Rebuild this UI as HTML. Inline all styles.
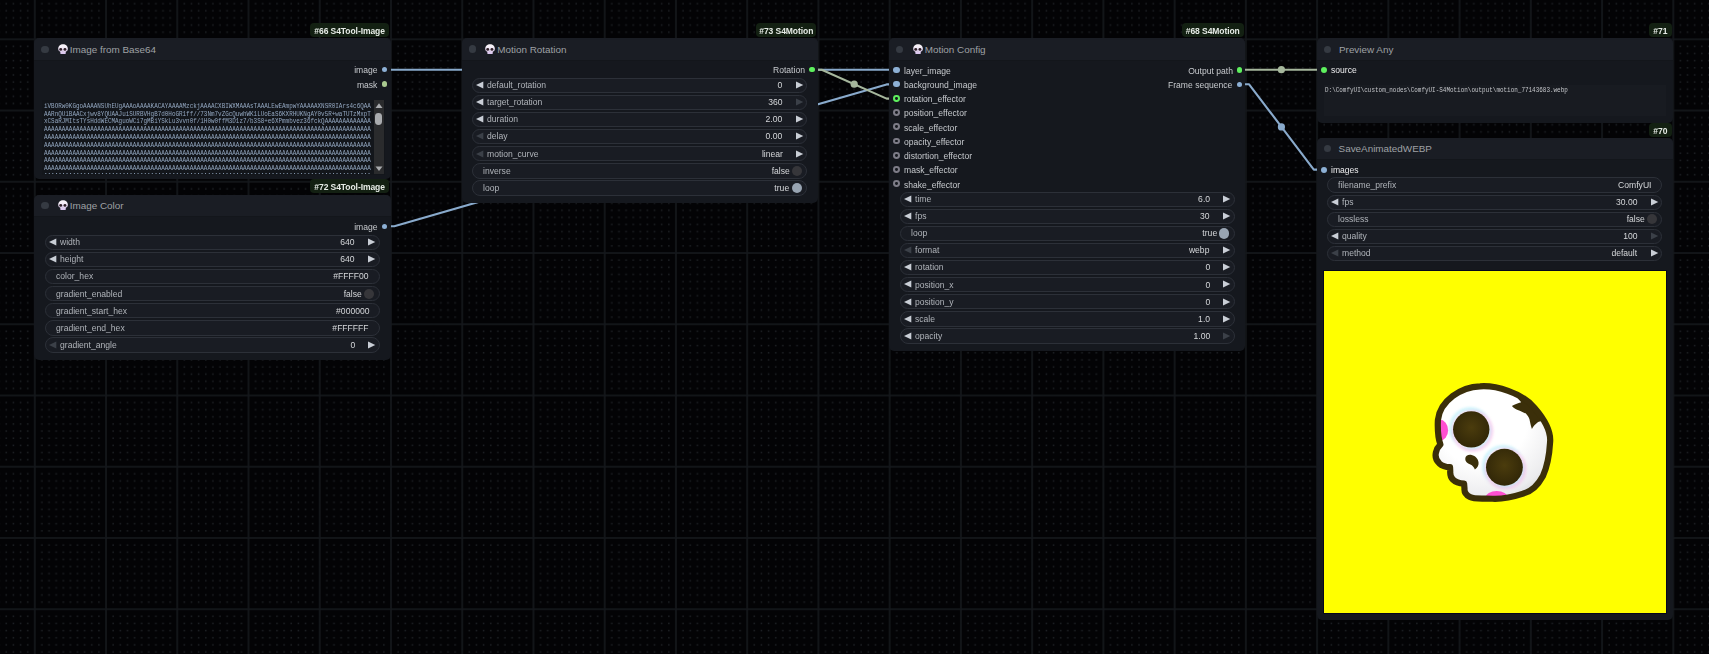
<!DOCTYPE html><html><head><meta charset="utf-8"><style>
html,body{margin:0;padding:0;width:1709px;height:654px;overflow:hidden;background:#030305;font-family:"Liberation Sans",sans-serif;}
div{position:absolute;white-space:nowrap;}
svg{position:absolute;}
.node{background:#15181e;border-radius:5px;}
.title{background:#1a1d24;border-radius:5px 5px 0 0;}
.tdot{width:7.2px;height:7.2px;border-radius:50%;background:#353a42;}
.ttxt{font-size:9.9px;color:#9fa1a5;line-height:12px;}
.badge{background:#132012;border-radius:4px;height:13.9px;}
.btxt{left:0;right:0;top:0;color:#e6ebe6;font-weight:bold;font-size:9.6px;letter-spacing:-0.1px;line-height:15.6px;text-align:center;transform:scaleX(0.89);}
.w{height:15.4px;border:1px solid #2c3038;border-radius:8px;background:#191c23;box-sizing:border-box;}
.lbl{font-size:9.4px;color:#b0b4ba;line-height:11px;transform:scaleX(0.915);transform-origin:0 0;}
.val{font-size:9.4px;color:#d6d8db;line-height:11px;text-align:right;transform:scaleX(0.915);transform-origin:100% 0;}
.slot{font-size:9.4px;color:#c6c9cd;line-height:11px;transform:scaleX(0.915);transform-origin:0 0;}
.R{transform-origin:100% 0;}
.dot{border-radius:50%;}
.mono{font-family:"Liberation Mono",monospace;}

</style></head><body>
<svg style="left:0;top:0" width="1709" height="654">
<defs><pattern id="g" patternUnits="userSpaceOnUse" x="33.80" y="38.30" width="71.240" height="71.240">
<rect x="7.37" y="7.37" width="1.5" height="1.5" fill="#1d2024"/>
<rect x="7.37" y="14.50" width="1.5" height="1.5" fill="#1d2024"/>
<rect x="7.37" y="21.62" width="1.5" height="1.5" fill="#1d2024"/>
<rect x="7.37" y="28.75" width="1.5" height="1.5" fill="#1d2024"/>
<rect x="7.37" y="35.87" width="1.5" height="1.5" fill="#1d2024"/>
<rect x="7.37" y="42.99" width="1.5" height="1.5" fill="#1d2024"/>
<rect x="7.37" y="50.12" width="1.5" height="1.5" fill="#1d2024"/>
<rect x="7.37" y="57.24" width="1.5" height="1.5" fill="#1d2024"/>
<rect x="7.37" y="64.37" width="1.5" height="1.5" fill="#1d2024"/>
<rect x="14.50" y="7.37" width="1.5" height="1.5" fill="#1d2024"/>
<rect x="14.50" y="14.50" width="1.5" height="1.5" fill="#1d2024"/>
<rect x="14.50" y="21.62" width="1.5" height="1.5" fill="#1d2024"/>
<rect x="14.50" y="28.75" width="1.5" height="1.5" fill="#1d2024"/>
<rect x="14.50" y="35.87" width="1.5" height="1.5" fill="#1d2024"/>
<rect x="14.50" y="42.99" width="1.5" height="1.5" fill="#1d2024"/>
<rect x="14.50" y="50.12" width="1.5" height="1.5" fill="#1d2024"/>
<rect x="14.50" y="57.24" width="1.5" height="1.5" fill="#1d2024"/>
<rect x="14.50" y="64.37" width="1.5" height="1.5" fill="#1d2024"/>
<rect x="21.62" y="7.37" width="1.5" height="1.5" fill="#1d2024"/>
<rect x="21.62" y="14.50" width="1.5" height="1.5" fill="#1d2024"/>
<rect x="21.62" y="21.62" width="1.5" height="1.5" fill="#1d2024"/>
<rect x="21.62" y="28.75" width="1.5" height="1.5" fill="#1d2024"/>
<rect x="21.62" y="35.87" width="1.5" height="1.5" fill="#1d2024"/>
<rect x="21.62" y="42.99" width="1.5" height="1.5" fill="#1d2024"/>
<rect x="21.62" y="50.12" width="1.5" height="1.5" fill="#1d2024"/>
<rect x="21.62" y="57.24" width="1.5" height="1.5" fill="#1d2024"/>
<rect x="21.62" y="64.37" width="1.5" height="1.5" fill="#1d2024"/>
<rect x="28.75" y="7.37" width="1.5" height="1.5" fill="#1d2024"/>
<rect x="28.75" y="14.50" width="1.5" height="1.5" fill="#1d2024"/>
<rect x="28.75" y="21.62" width="1.5" height="1.5" fill="#1d2024"/>
<rect x="28.75" y="28.75" width="1.5" height="1.5" fill="#1d2024"/>
<rect x="28.75" y="35.87" width="1.5" height="1.5" fill="#1d2024"/>
<rect x="28.75" y="42.99" width="1.5" height="1.5" fill="#1d2024"/>
<rect x="28.75" y="50.12" width="1.5" height="1.5" fill="#1d2024"/>
<rect x="28.75" y="57.24" width="1.5" height="1.5" fill="#1d2024"/>
<rect x="28.75" y="64.37" width="1.5" height="1.5" fill="#1d2024"/>
<rect x="35.87" y="7.37" width="1.5" height="1.5" fill="#1d2024"/>
<rect x="35.87" y="14.50" width="1.5" height="1.5" fill="#1d2024"/>
<rect x="35.87" y="21.62" width="1.5" height="1.5" fill="#1d2024"/>
<rect x="35.87" y="28.75" width="1.5" height="1.5" fill="#1d2024"/>
<rect x="35.87" y="35.87" width="1.5" height="1.5" fill="#1d2024"/>
<rect x="35.87" y="42.99" width="1.5" height="1.5" fill="#1d2024"/>
<rect x="35.87" y="50.12" width="1.5" height="1.5" fill="#1d2024"/>
<rect x="35.87" y="57.24" width="1.5" height="1.5" fill="#1d2024"/>
<rect x="35.87" y="64.37" width="1.5" height="1.5" fill="#1d2024"/>
<rect x="42.99" y="7.37" width="1.5" height="1.5" fill="#1d2024"/>
<rect x="42.99" y="14.50" width="1.5" height="1.5" fill="#1d2024"/>
<rect x="42.99" y="21.62" width="1.5" height="1.5" fill="#1d2024"/>
<rect x="42.99" y="28.75" width="1.5" height="1.5" fill="#1d2024"/>
<rect x="42.99" y="35.87" width="1.5" height="1.5" fill="#1d2024"/>
<rect x="42.99" y="42.99" width="1.5" height="1.5" fill="#1d2024"/>
<rect x="42.99" y="50.12" width="1.5" height="1.5" fill="#1d2024"/>
<rect x="42.99" y="57.24" width="1.5" height="1.5" fill="#1d2024"/>
<rect x="42.99" y="64.37" width="1.5" height="1.5" fill="#1d2024"/>
<rect x="50.12" y="7.37" width="1.5" height="1.5" fill="#1d2024"/>
<rect x="50.12" y="14.50" width="1.5" height="1.5" fill="#1d2024"/>
<rect x="50.12" y="21.62" width="1.5" height="1.5" fill="#1d2024"/>
<rect x="50.12" y="28.75" width="1.5" height="1.5" fill="#1d2024"/>
<rect x="50.12" y="35.87" width="1.5" height="1.5" fill="#1d2024"/>
<rect x="50.12" y="42.99" width="1.5" height="1.5" fill="#1d2024"/>
<rect x="50.12" y="50.12" width="1.5" height="1.5" fill="#1d2024"/>
<rect x="50.12" y="57.24" width="1.5" height="1.5" fill="#1d2024"/>
<rect x="50.12" y="64.37" width="1.5" height="1.5" fill="#1d2024"/>
<rect x="57.24" y="7.37" width="1.5" height="1.5" fill="#1d2024"/>
<rect x="57.24" y="14.50" width="1.5" height="1.5" fill="#1d2024"/>
<rect x="57.24" y="21.62" width="1.5" height="1.5" fill="#1d2024"/>
<rect x="57.24" y="28.75" width="1.5" height="1.5" fill="#1d2024"/>
<rect x="57.24" y="35.87" width="1.5" height="1.5" fill="#1d2024"/>
<rect x="57.24" y="42.99" width="1.5" height="1.5" fill="#1d2024"/>
<rect x="57.24" y="50.12" width="1.5" height="1.5" fill="#1d2024"/>
<rect x="57.24" y="57.24" width="1.5" height="1.5" fill="#1d2024"/>
<rect x="57.24" y="64.37" width="1.5" height="1.5" fill="#1d2024"/>
<rect x="64.37" y="7.37" width="1.5" height="1.5" fill="#1d2024"/>
<rect x="64.37" y="14.50" width="1.5" height="1.5" fill="#1d2024"/>
<rect x="64.37" y="21.62" width="1.5" height="1.5" fill="#1d2024"/>
<rect x="64.37" y="28.75" width="1.5" height="1.5" fill="#1d2024"/>
<rect x="64.37" y="35.87" width="1.5" height="1.5" fill="#1d2024"/>
<rect x="64.37" y="42.99" width="1.5" height="1.5" fill="#1d2024"/>
<rect x="64.37" y="50.12" width="1.5" height="1.5" fill="#1d2024"/>
<rect x="64.37" y="57.24" width="1.5" height="1.5" fill="#1d2024"/>
<rect x="64.37" y="64.37" width="1.5" height="1.5" fill="#1d2024"/>
<rect x="0.2" y="0.2" width="71.240" height="1.6" fill="#15181c"/><rect x="0.2" y="0.2" width="1.6" height="71.240" fill="#15181c"/>
</pattern></defs><rect width="1709" height="654" fill="url(#g)"/>
<path d="M384.3 69.7L394.3 69.7L886.6 69.8L896.6 69.8" stroke="#89aacc" stroke-width="2.1" fill="none" stroke-linejoin="round"/>
<circle cx="640.5" cy="69.8" r="3.6" fill="#89aacc"/>
<path d="M384.3 226.3L394.3 226.3L886.6 84.4L896.6 84.4" stroke="#89aacc" stroke-width="2.1" fill="none" stroke-linejoin="round"/>
<circle cx="640.5" cy="155.4" r="3.6" fill="#89aacc"/>
<path d="M811.7 69.7L821.7 69.7L886.6 98.6L896.6 98.6" stroke="#a6b79d" stroke-width="2.1" fill="none" stroke-linejoin="round"/>
<circle cx="854.2" cy="84.2" r="3.6" fill="#a6b79d"/>
<path d="M1239.1 69.7L1249.1 69.7L1313.8 69.7L1323.8 69.7" stroke="#a6b79d" stroke-width="2.1" fill="none" stroke-linejoin="round"/>
<circle cx="1281.4" cy="69.7" r="3.6" fill="#a6b79d"/>
<path d="M1239.1 84.3L1249.1 84.3L1313.8 169.6L1323.8 169.6" stroke="#89aacc" stroke-width="2.1" fill="none" stroke-linejoin="round"/>
<circle cx="1281.4" cy="126.9" r="3.6" fill="#89aacc"/>
</svg>
<div class="node" style="left:34.3px;top:38.3px;width:356.3px;height:141.0px"></div>
<div class="title" style="left:34.3px;top:38.3px;width:356.3px;height:21.4px"></div>
<div style="left:34.3px;top:59.6px;width:356.3px;height:1px;background:#13161b"></div>
<div class="tdot" style="left:41.4px;top:45.5px"></div>
<svg width="10.1" height="10.1" viewBox="0 0 10 10" style="left:57.8px;top:43.9px"><defs><linearGradient id="sg" x1="0" y1="0" x2="0" y2="1"><stop offset="0.2" stop-color="#f7f2f8"/><stop offset="1" stop-color="#d8c2ee"/></linearGradient></defs><path d="M5 0.2C2.2 0.2 0.2 2.2 0.2 4.8C0.2 6.3 1 7.3 2.3 7.8L2.3 9.2C2.3 9.7 2.7 10 3.1 10L6.9 10C7.3 10 7.7 9.7 7.7 9.2L7.7 7.8C9 7.3 9.8 6.3 9.8 4.8C9.8 2.2 7.8 0.2 5 0.2Z" fill="url(#sg)"/><ellipse cx="2.7" cy="5.4" rx="1.45" ry="1.4" fill="#2e1f26"/><ellipse cx="6.9" cy="5.4" rx="1.45" ry="1.4" fill="#2e1f26"/><path d="M4.8 6.4L5.3 7.3L4.3 7.3Z" fill="#8a7a90"/></svg>
<div class="ttxt" style="left:69.8px;top:43.6px">Image from Base64</div>
<div class="badge" style="left:310.0px;width:79.0px;top:23.0px"><div class="btxt">#66 S4Tool-Image</div></div>
<div class="dot" style="left:381.8px;top:66.9px;width:5.6px;height:5.6px;background:#8db0d5"></div>
<div class="slot R" style="right:1331.3px;top:64.4px">image</div>
<div class="dot" style="left:381.8px;top:81.4px;width:5.6px;height:5.6px;background:#a9c98f"></div>
<div class="slot R" style="right:1331.3px;top:78.9px">mask</div>
<div class="node" style="left:34.3px;top:194.8px;width:356.3px;height:165.1px"></div>
<div class="title" style="left:34.3px;top:194.8px;width:356.3px;height:21.4px"></div>
<div style="left:34.3px;top:216.1px;width:356.3px;height:1px;background:#13161b"></div>
<div class="tdot" style="left:41.4px;top:202.0px"></div>
<svg width="10.1" height="10.1" viewBox="0 0 10 10" style="left:57.8px;top:200.4px"><defs><linearGradient id="sg" x1="0" y1="0" x2="0" y2="1"><stop offset="0.2" stop-color="#f7f2f8"/><stop offset="1" stop-color="#d8c2ee"/></linearGradient></defs><path d="M5 0.2C2.2 0.2 0.2 2.2 0.2 4.8C0.2 6.3 1 7.3 2.3 7.8L2.3 9.2C2.3 9.7 2.7 10 3.1 10L6.9 10C7.3 10 7.7 9.7 7.7 9.2L7.7 7.8C9 7.3 9.8 6.3 9.8 4.8C9.8 2.2 7.8 0.2 5 0.2Z" fill="url(#sg)"/><ellipse cx="2.7" cy="5.4" rx="1.45" ry="1.4" fill="#2e1f26"/><ellipse cx="6.9" cy="5.4" rx="1.45" ry="1.4" fill="#2e1f26"/><path d="M4.8 6.4L5.3 7.3L4.3 7.3Z" fill="#8a7a90"/></svg>
<div class="ttxt" style="left:69.8px;top:200.1px">Image Color</div>
<div class="badge" style="left:310.0px;width:79.0px;top:179.4px"><div class="btxt">#72 S4Tool-Image</div></div>
<div class="dot" style="left:381.8px;top:223.5px;width:5.6px;height:5.6px;background:#8db0d5"></div>
<div class="slot R" style="right:1331.3px;top:221.0px">image</div>
<div class="w" style="left:44.8px;top:234.7px;width:335.2px"></div>
<svg width="8" height="8" style="left:48.9px;top:238.1px"><path d="M7.3 0.4L7.3 7.6L0 4Z" fill="#c9ced6"/></svg>
<svg width="8" height="8" style="left:368.4px;top:238.1px"><path d="M0 0.4L0 7.6L7.3 4Z" fill="#c9ced6"/></svg>
<div class="lbl" style="left:59.6px;top:236.2px">width</div>
<div class="val" style="right:1354.0px;top:236.2px">640</div>
<div class="w" style="left:44.8px;top:251.8px;width:335.2px"></div>
<svg width="8" height="8" style="left:48.9px;top:255.2px"><path d="M7.3 0.4L7.3 7.6L0 4Z" fill="#c9ced6"/></svg>
<svg width="8" height="8" style="left:368.4px;top:255.2px"><path d="M0 0.4L0 7.6L7.3 4Z" fill="#c9ced6"/></svg>
<div class="lbl" style="left:59.6px;top:253.3px">height</div>
<div class="val" style="right:1354.0px;top:253.3px">640</div>
<div class="w" style="left:44.8px;top:268.9px;width:335.2px"></div>
<div class="lbl" style="left:55.7px;top:270.4px">color_hex</div>
<div class="val" style="right:1340.0px;top:270.4px">#FFFF00</div>
<div class="w" style="left:44.8px;top:286.0px;width:335.2px"></div>
<div class="lbl" style="left:55.7px;top:287.5px">gradient_enabled</div>
<div class="val" style="right:1346.9px;top:287.5px">false</div>
<div class="dot" style="left:364.2px;top:288.7px;width:10.2px;height:10.2px;background:#36363a"></div>
<div class="w" style="left:44.8px;top:303.1px;width:335.2px"></div>
<div class="lbl" style="left:55.7px;top:304.6px">gradient_start_hex</div>
<div class="val" style="right:1340.0px;top:304.6px">#000000</div>
<div class="w" style="left:44.8px;top:320.2px;width:335.2px"></div>
<div class="lbl" style="left:55.7px;top:321.7px">gradient_end_hex</div>
<div class="val" style="right:1340.0px;top:321.7px">#FFFFFF</div>
<div class="w" style="left:44.8px;top:337.3px;width:335.2px"></div>
<svg width="8" height="8" style="left:48.9px;top:340.7px"><path d="M7.3 0.4L7.3 7.6L0 4Z" fill="#3b4048"/></svg>
<svg width="8" height="8" style="left:368.4px;top:340.7px"><path d="M0 0.4L0 7.6L7.3 4Z" fill="#c9ced6"/></svg>
<div class="lbl" style="left:59.6px;top:338.8px">gradient_angle</div>
<div class="val" style="right:1354.0px;top:338.8px">0</div>
<div class="node" style="left:461.8px;top:38.2px;width:356.3px;height:165.3px"></div>
<div class="title" style="left:461.8px;top:38.2px;width:356.3px;height:21.4px"></div>
<div style="left:461.8px;top:59.5px;width:356.3px;height:1px;background:#13161b"></div>
<div class="tdot" style="left:468.9px;top:45.4px"></div>
<svg width="10.1" height="10.1" viewBox="0 0 10 10" style="left:485.3px;top:43.8px"><defs><linearGradient id="sg" x1="0" y1="0" x2="0" y2="1"><stop offset="0.2" stop-color="#f7f2f8"/><stop offset="1" stop-color="#d8c2ee"/></linearGradient></defs><path d="M5 0.2C2.2 0.2 0.2 2.2 0.2 4.8C0.2 6.3 1 7.3 2.3 7.8L2.3 9.2C2.3 9.7 2.7 10 3.1 10L6.9 10C7.3 10 7.7 9.7 7.7 9.2L7.7 7.8C9 7.3 9.8 6.3 9.8 4.8C9.8 2.2 7.8 0.2 5 0.2Z" fill="url(#sg)"/><ellipse cx="2.7" cy="5.4" rx="1.45" ry="1.4" fill="#2e1f26"/><ellipse cx="6.9" cy="5.4" rx="1.45" ry="1.4" fill="#2e1f26"/><path d="M4.8 6.4L5.3 7.3L4.3 7.3Z" fill="#8a7a90"/></svg>
<div class="ttxt" style="left:497.3px;top:43.5px">Motion Rotation</div>
<div class="badge" style="left:756.0px;width:60.0px;top:23.0px"><div class="btxt">#73 S4Motion</div></div>
<div class="dot" style="left:809.3px;top:66.9px;width:5.6px;height:5.6px;background:#5ef05e"></div>
<div class="slot R" style="right:903.8px;top:64.4px">Rotation</div>
<div class="w" style="left:472.3px;top:77.5px;width:335.2px"></div>
<svg width="8" height="8" style="left:476.4px;top:80.9px"><path d="M7.3 0.4L7.3 7.6L0 4Z" fill="#c9ced6"/></svg>
<svg width="8" height="8" style="left:795.9px;top:80.9px"><path d="M0 0.4L0 7.6L7.3 4Z" fill="#c9ced6"/></svg>
<div class="lbl" style="left:487.1px;top:79.0px">default_rotation</div>
<div class="val" style="right:926.5px;top:79.0px">0</div>
<div class="w" style="left:472.3px;top:94.7px;width:335.2px"></div>
<svg width="8" height="8" style="left:476.4px;top:98.1px"><path d="M7.3 0.4L7.3 7.6L0 4Z" fill="#c9ced6"/></svg>
<svg width="8" height="8" style="left:795.9px;top:98.1px"><path d="M0 0.4L0 7.6L7.3 4Z" fill="#3b4048"/></svg>
<div class="lbl" style="left:487.1px;top:96.2px">target_rotation</div>
<div class="val" style="right:926.5px;top:96.2px">360</div>
<div class="w" style="left:472.3px;top:111.8px;width:335.2px"></div>
<svg width="8" height="8" style="left:476.4px;top:115.2px"><path d="M7.3 0.4L7.3 7.6L0 4Z" fill="#c9ced6"/></svg>
<svg width="8" height="8" style="left:795.9px;top:115.2px"><path d="M0 0.4L0 7.6L7.3 4Z" fill="#c9ced6"/></svg>
<div class="lbl" style="left:487.1px;top:113.3px">duration</div>
<div class="val" style="right:926.5px;top:113.3px">2.00</div>
<div class="w" style="left:472.3px;top:128.9px;width:335.2px"></div>
<svg width="8" height="8" style="left:476.4px;top:132.3px"><path d="M7.3 0.4L7.3 7.6L0 4Z" fill="#3b4048"/></svg>
<svg width="8" height="8" style="left:795.9px;top:132.3px"><path d="M0 0.4L0 7.6L7.3 4Z" fill="#c9ced6"/></svg>
<div class="lbl" style="left:487.1px;top:130.4px">delay</div>
<div class="val" style="right:926.5px;top:130.4px">0.00</div>
<div class="w" style="left:472.3px;top:146.1px;width:335.2px"></div>
<svg width="8" height="8" style="left:476.4px;top:149.5px"><path d="M7.3 0.4L7.3 7.6L0 4Z" fill="#3b4048"/></svg>
<svg width="8" height="8" style="left:795.9px;top:149.5px"><path d="M0 0.4L0 7.6L7.3 4Z" fill="#c9ced6"/></svg>
<div class="lbl" style="left:487.1px;top:147.6px">motion_curve</div>
<div class="val" style="right:926.5px;top:147.6px">linear</div>
<div class="w" style="left:472.3px;top:163.2px;width:335.2px"></div>
<div class="lbl" style="left:483.2px;top:164.8px">inverse</div>
<div class="val" style="right:919.4px;top:164.8px">false</div>
<div class="dot" style="left:791.7px;top:166.0px;width:10.2px;height:10.2px;background:#36363a"></div>
<div class="w" style="left:472.3px;top:180.4px;width:335.2px"></div>
<div class="lbl" style="left:483.2px;top:181.9px">loop</div>
<div class="val" style="right:919.4px;top:181.9px">true</div>
<div class="dot" style="left:791.7px;top:183.1px;width:10.2px;height:10.2px;background:#98a4b2"></div>
<div class="node" style="left:889.2px;top:38.3px;width:356.3px;height:312.4px"></div>
<div class="title" style="left:889.2px;top:38.3px;width:356.3px;height:21.4px"></div>
<div style="left:889.2px;top:59.6px;width:356.3px;height:1px;background:#13161b"></div>
<div class="tdot" style="left:896.3px;top:45.5px"></div>
<svg width="10.1" height="10.1" viewBox="0 0 10 10" style="left:912.7px;top:43.9px"><defs><linearGradient id="sg" x1="0" y1="0" x2="0" y2="1"><stop offset="0.2" stop-color="#f7f2f8"/><stop offset="1" stop-color="#d8c2ee"/></linearGradient></defs><path d="M5 0.2C2.2 0.2 0.2 2.2 0.2 4.8C0.2 6.3 1 7.3 2.3 7.8L2.3 9.2C2.3 9.7 2.7 10 3.1 10L6.9 10C7.3 10 7.7 9.7 7.7 9.2L7.7 7.8C9 7.3 9.8 6.3 9.8 4.8C9.8 2.2 7.8 0.2 5 0.2Z" fill="url(#sg)"/><ellipse cx="2.7" cy="5.4" rx="1.45" ry="1.4" fill="#2e1f26"/><ellipse cx="6.9" cy="5.4" rx="1.45" ry="1.4" fill="#2e1f26"/><path d="M4.8 6.4L5.3 7.3L4.3 7.3Z" fill="#8a7a90"/></svg>
<div class="ttxt" style="left:924.7px;top:43.6px">Motion Config</div>
<div class="badge" style="left:1182.0px;width:61.5px;top:23.0px"><div class="btxt">#68 S4Motion</div></div>
<div class="dot" style="left:1236.7px;top:67.0px;width:5.6px;height:5.6px;background:#5ef05e"></div>
<div class="slot R" style="right:476.4px;top:64.5px">Output path</div>
<div class="dot" style="left:1236.7px;top:81.5px;width:5.6px;height:5.6px;background:#8db0d5"></div>
<div class="slot R" style="right:476.4px;top:79.0px">Frame sequence</div>
<div class="dot" style="left:893.4px;top:66.7px;width:6.2px;height:6.2px;background:#8db0d5"></div>
<div class="slot" style="left:904.0px;top:64.5px">layer_image</div>
<div class="dot" style="left:893.4px;top:81.0px;width:6.2px;height:6.2px;background:#8db0d5"></div>
<div class="slot" style="left:904.0px;top:78.8px">background_image</div>
<div class="dot" style="left:893.1px;top:94.9px;width:6.8px;height:6.8px;box-sizing:border-box;border:2.3px solid #5ef05e"></div>
<div class="slot" style="left:904.0px;top:93.0px">rotation_effector</div>
<div class="dot" style="left:893.1px;top:109.1px;width:6.8px;height:6.8px;box-sizing:border-box;border:2.3px solid #7d7c87"></div>
<div class="slot" style="left:904.0px;top:107.2px">position_effector</div>
<div class="dot" style="left:893.1px;top:123.4px;width:6.8px;height:6.8px;box-sizing:border-box;border:2.3px solid #7d7c87"></div>
<div class="slot" style="left:904.0px;top:121.5px">scale_effector</div>
<div class="dot" style="left:893.1px;top:137.7px;width:6.8px;height:6.8px;box-sizing:border-box;border:2.3px solid #7d7c87"></div>
<div class="slot" style="left:904.0px;top:135.8px">opacity_effector</div>
<div class="dot" style="left:893.1px;top:151.9px;width:6.8px;height:6.8px;box-sizing:border-box;border:2.3px solid #7d7c87"></div>
<div class="slot" style="left:904.0px;top:150.0px">distortion_effector</div>
<div class="dot" style="left:893.1px;top:166.2px;width:6.8px;height:6.8px;box-sizing:border-box;border:2.3px solid #7d7c87"></div>
<div class="slot" style="left:904.0px;top:164.2px">mask_effector</div>
<div class="dot" style="left:893.1px;top:180.4px;width:6.8px;height:6.8px;box-sizing:border-box;border:2.3px solid #7d7c87"></div>
<div class="slot" style="left:904.0px;top:178.5px">shake_effector</div>
<div class="w" style="left:899.7px;top:191.5px;width:335.2px"></div>
<svg width="8" height="8" style="left:903.8px;top:194.9px"><path d="M7.3 0.4L7.3 7.6L0 4Z" fill="#c9ced6"/></svg>
<svg width="8" height="8" style="left:1223.3px;top:194.9px"><path d="M0 0.4L0 7.6L7.3 4Z" fill="#c9ced6"/></svg>
<div class="lbl" style="left:914.5px;top:193.0px">time</div>
<div class="val" style="right:499.1px;top:193.0px">6.0</div>
<div class="w" style="left:899.7px;top:208.6px;width:335.2px"></div>
<svg width="8" height="8" style="left:903.8px;top:212.0px"><path d="M7.3 0.4L7.3 7.6L0 4Z" fill="#c9ced6"/></svg>
<svg width="8" height="8" style="left:1223.3px;top:212.0px"><path d="M0 0.4L0 7.6L7.3 4Z" fill="#c9ced6"/></svg>
<div class="lbl" style="left:914.5px;top:210.1px">fps</div>
<div class="val" style="right:499.1px;top:210.1px">30</div>
<div class="w" style="left:899.7px;top:225.7px;width:335.2px"></div>
<div class="lbl" style="left:910.6px;top:227.2px">loop</div>
<div class="val" style="right:492.0px;top:227.2px">true</div>
<div class="dot" style="left:1219.1px;top:228.4px;width:10.2px;height:10.2px;background:#98a4b2"></div>
<div class="w" style="left:899.7px;top:242.8px;width:335.2px"></div>
<svg width="8" height="8" style="left:903.8px;top:246.2px"><path d="M7.3 0.4L7.3 7.6L0 4Z" fill="#3b4048"/></svg>
<svg width="8" height="8" style="left:1223.3px;top:246.2px"><path d="M0 0.4L0 7.6L7.3 4Z" fill="#c9ced6"/></svg>
<div class="lbl" style="left:914.5px;top:244.3px">format</div>
<div class="val" style="right:499.1px;top:244.3px">webp</div>
<div class="w" style="left:899.7px;top:259.9px;width:335.2px"></div>
<svg width="8" height="8" style="left:903.8px;top:263.3px"><path d="M7.3 0.4L7.3 7.6L0 4Z" fill="#c9ced6"/></svg>
<svg width="8" height="8" style="left:1223.3px;top:263.3px"><path d="M0 0.4L0 7.6L7.3 4Z" fill="#c9ced6"/></svg>
<div class="lbl" style="left:914.5px;top:261.4px">rotation</div>
<div class="val" style="right:499.1px;top:261.4px">0</div>
<div class="w" style="left:899.7px;top:277.0px;width:335.2px"></div>
<svg width="8" height="8" style="left:903.8px;top:280.4px"><path d="M7.3 0.4L7.3 7.6L0 4Z" fill="#c9ced6"/></svg>
<svg width="8" height="8" style="left:1223.3px;top:280.4px"><path d="M0 0.4L0 7.6L7.3 4Z" fill="#c9ced6"/></svg>
<div class="lbl" style="left:914.5px;top:278.5px">position_x</div>
<div class="val" style="right:499.1px;top:278.5px">0</div>
<div class="w" style="left:899.7px;top:294.1px;width:335.2px"></div>
<svg width="8" height="8" style="left:903.8px;top:297.5px"><path d="M7.3 0.4L7.3 7.6L0 4Z" fill="#c9ced6"/></svg>
<svg width="8" height="8" style="left:1223.3px;top:297.5px"><path d="M0 0.4L0 7.6L7.3 4Z" fill="#c9ced6"/></svg>
<div class="lbl" style="left:914.5px;top:295.6px">position_y</div>
<div class="val" style="right:499.1px;top:295.6px">0</div>
<div class="w" style="left:899.7px;top:311.2px;width:335.2px"></div>
<svg width="8" height="8" style="left:903.8px;top:314.6px"><path d="M7.3 0.4L7.3 7.6L0 4Z" fill="#c9ced6"/></svg>
<svg width="8" height="8" style="left:1223.3px;top:314.6px"><path d="M0 0.4L0 7.6L7.3 4Z" fill="#c9ced6"/></svg>
<div class="lbl" style="left:914.5px;top:312.7px">scale</div>
<div class="val" style="right:499.1px;top:312.7px">1.0</div>
<div class="w" style="left:899.7px;top:328.3px;width:335.2px"></div>
<svg width="8" height="8" style="left:903.8px;top:331.7px"><path d="M7.3 0.4L7.3 7.6L0 4Z" fill="#c9ced6"/></svg>
<svg width="8" height="8" style="left:1223.3px;top:331.7px"><path d="M0 0.4L0 7.6L7.3 4Z" fill="#3b4048"/></svg>
<div class="lbl" style="left:914.5px;top:329.8px">opacity</div>
<div class="val" style="right:499.1px;top:329.8px">1.00</div>
<div class="node" style="left:1317.2px;top:38.3px;width:356.3px;height:84.6px"></div>
<div class="title" style="left:1317.2px;top:38.3px;width:356.3px;height:21.4px"></div>
<div style="left:1317.2px;top:59.6px;width:356.3px;height:1px;background:#13161b"></div>
<div class="tdot" style="left:1324.3px;top:45.5px"></div>
<div class="ttxt" style="left:1339.0px;top:43.6px">Preview Any</div>
<div class="badge" style="left:1648.9px;width:22.7px;top:22.9px"><div class="btxt">#71</div></div>
<div class="dot" style="left:1320.8px;top:66.6px;width:6.2px;height:6.2px;background:#5ef05e"></div>
<div class="slot" style="left:1330.9px;top:64.4px;color:#ececee">source</div>
<div class="node" style="left:1316.8px;top:137.9px;width:356.3px;height:481.7px"></div>
<div class="title" style="left:1316.8px;top:137.9px;width:356.3px;height:21.4px"></div>
<div style="left:1316.8px;top:159.2px;width:356.3px;height:1px;background:#13161b"></div>
<div class="tdot" style="left:1323.9px;top:145.1px"></div>
<div class="ttxt" style="left:1338.6px;top:143.2px">SaveAnimatedWEBP</div>
<div class="badge" style="left:1648.9px;width:22.7px;top:123.4px"><div class="btxt">#70</div></div>
<div class="dot" style="left:1320.8px;top:166.5px;width:6.2px;height:6.2px;background:#8db0d5"></div>
<div class="slot" style="left:1330.9px;top:164.3px;color:#ececee">images</div>
<div class="w" style="left:1327.3px;top:177.4px;width:335.2px"></div>
<div class="lbl" style="left:1338.2px;top:178.9px">filename_prefix</div>
<div class="val" style="right:57.5px;top:178.9px">ComfyUI</div>
<div class="w" style="left:1327.3px;top:194.5px;width:335.2px"></div>
<svg width="8" height="8" style="left:1331.4px;top:197.9px"><path d="M7.3 0.4L7.3 7.6L0 4Z" fill="#c9ced6"/></svg>
<svg width="8" height="8" style="left:1650.9px;top:197.9px"><path d="M0 0.4L0 7.6L7.3 4Z" fill="#c9ced6"/></svg>
<div class="lbl" style="left:1342.1px;top:196.0px">fps</div>
<div class="val" style="right:71.5px;top:196.0px">30.00</div>
<div class="w" style="left:1327.3px;top:211.6px;width:335.2px"></div>
<div class="lbl" style="left:1338.2px;top:213.1px">lossless</div>
<div class="val" style="right:64.4px;top:213.1px">false</div>
<div class="dot" style="left:1646.7px;top:214.3px;width:10.2px;height:10.2px;background:#36363a"></div>
<div class="w" style="left:1327.3px;top:228.7px;width:335.2px"></div>
<svg width="8" height="8" style="left:1331.4px;top:232.1px"><path d="M7.3 0.4L7.3 7.6L0 4Z" fill="#c9ced6"/></svg>
<svg width="8" height="8" style="left:1650.9px;top:232.1px"><path d="M0 0.4L0 7.6L7.3 4Z" fill="#3b4048"/></svg>
<div class="lbl" style="left:1342.1px;top:230.2px">quality</div>
<div class="val" style="right:71.5px;top:230.2px">100</div>
<div class="w" style="left:1327.3px;top:245.8px;width:335.2px"></div>
<svg width="8" height="8" style="left:1331.4px;top:249.2px"><path d="M7.3 0.4L7.3 7.6L0 4Z" fill="#3b4048"/></svg>
<svg width="8" height="8" style="left:1650.9px;top:249.2px"><path d="M0 0.4L0 7.6L7.3 4Z" fill="#c9ced6"/></svg>
<div class="lbl" style="left:1342.1px;top:247.3px">method</div>
<div class="val" style="right:71.5px;top:247.3px">default</div>
<div style="left:41.5px;top:99.8px;width:343px;height:74.8px;background:#13161b;overflow:hidden"></div>
<div style="left:43.8px;top:101.9px;width:328px;height:72.5px;overflow:hidden"><div class="mono" style="left:0;top:0;font-size:8px;line-height:7.8px;color:#93a7c0;white-space:pre;transform:scaleX(0.74);transform-origin:0 0">iVBORw0KGgoAAAANSUhEUgAAAoAAAAKACAYAAAAMzckjAAAACXBIWXMAAAsTAAALEwEAmpwYAAAAAXNSR0IArs4c6QAA
AARnQU1BAACxjwv8YQUAAJuiSURBVHgB7d0HoGR1ff//73Nm7vZGcQuwhWK1LUoEaS6KXRHUKNgAY0v5R+waTUTzMxpT
xCSaRJMItsTYsHddWECMAguoWCi7gMBiYSkLu3vvn0f/1H0w0ffM3D1z7/b3S8+e6XPmmbvez36fckQAAAAAAAAAAAAA
AAAAAAAAAAAAAAAAAAAAAAAAAAAAAAAAAAAAAAAAAAAAAAAAAAAAAAAAAAAAAAAAAAAAAAAAAAAAAAAAAAAAAAAAAAAA
AAAAAAAAAAAAAAAAAAAAAAAAAAAAAAAAAAAAAAAAAAAAAAAAAAAAAAAAAAAAAAAAAAAAAAAAAAAAAAAAAAAAAAAAAAAA
AAAAAAAAAAAAAAAAAAAAAAAAAAAAAAAAAAAAAAAAAAAAAAAAAAAAAAAAAAAAAAAAAAAAAAAAAAAAAAAAAAAAAAAAAAAA
AAAAAAAAAAAAAAAAAAAAAAAAAAAAAAAAAAAAAAAAAAAAAAAAAAAAAAAAAAAAAAAAAAAAAAAAAAAAAAAAAAAAAAAAAAAA
AAAAAAAAAAAAAAAAAAAAAAAAAAAAAAAAAAAAAAAAAAAAAAAAAAAAAAAAAAAAAAAAAAAAAAAAAAAAAAAAAAAAAAAAAAAA
AAAAAAAAAAAAAAAAAAAAAAAAAAAAAAAAAAAAAAAAAAAAAAAAAAAAAAAAAAAAAAAAAAAAAAAAAAAAAAAAAAAAAAAAAAAA
AAAAAAAAAAAAAAAAAAAAAAAAAAAAAAAAAAAAAAAAAAAAAAAAAAAAAAAAAAAAAAAAAAAAAAAAAAAAAAAAAAAAAAAAAAAA</div></div>
<div style="left:374px;top:100.1px;width:9.8px;height:73.6px;background:#2a2b2d"></div>
<svg width="10" height="8" style="left:374px;top:101.3px"><path d="M1.5 7L5 2.2L8.5 7Z" fill="#a9abae"/></svg>
<svg width="10" height="8" style="left:374px;top:165px"><path d="M1.5 1.5L5 6L8.5 1.5Z" fill="#a9abae"/></svg>
<div style="left:375.2px;top:112.9px;width:6.7px;height:12.1px;border-radius:3.4px;background:#a9abae"></div>
<div style="left:1323.9px;top:85.1px;width:342.5px;height:31px;background:#181b21"></div>
<div class="mono" style="left:1325px;top:85.6px;font-size:7px;line-height:9px;color:#c4c6ca;transform:scaleX(0.85);transform-origin:0 0">D:\ComfyUI\custom_nodes\ComfyUI-S4Motion\output\motion_77143683.webp</div>
<div style="left:1324px;top:271px;width:342px;height:342px;background:#ffff00;box-shadow:0 0 0 0.7px #00001a"></div>
<svg width="140" height="140" viewBox="0 0 654 654" style="left:1425px;top:375px"><defs><radialGradient id="wg" cx="0.4" cy="0.3" r="0.8"><stop offset="0.5" stop-color="#ffffff"/><stop offset="0.85" stop-color="#ececee"/><stop offset="1" stop-color="#d2d2d6"/></radialGradient><radialGradient id="eg" cx="0.5" cy="0.45" r="0.6"><stop offset="0" stop-color="#4b3c0d"/><stop offset="1" stop-color="#2f2507"/></radialGradient><filter id="bl" x="-30%" y="-30%" width="160%" height="160%"><feGaussianBlur stdDeviation="7"/></filter><clipPath id="sk"><path d="M256.9 53C330 48 450 80 512 154C565 215 590 270 584 318C580 390 565 440 551 472C525 520 495 545 459 554C410 570 360 580 315 578L284 577C250 578 225 578 210 570C190 560 183 545 184.5 530L182.5 507.4C160 506 140 498 130 488C120 478 117 465 118 450L116.9 430.2C100 430 80 425 67 413C52 400 47 380 51 362C55 345 63 333 71.9 324.7C63 300 58 260 60.3 210.2C70 120 170 55 256.9 53Z"/></clipPath></defs><path d="M256.9 53C330 48 450 80 512 154C565 215 590 270 584 318C580 390 565 440 551 472C525 520 495 545 459 554C410 570 360 580 315 578L284 577C250 578 225 578 210 570C190 560 183 545 184.5 530L182.5 507.4C160 506 140 498 130 488C120 478 117 465 118 450L116.9 430.2C100 430 80 425 67 413C52 400 47 380 51 362C55 345 63 333 71.9 324.7C63 300 58 260 60.3 210.2C70 120 170 55 256.9 53Z" fill="url(#wg)"/><g clip-path="url(#sk)"><ellipse cx="68" cy="258" rx="40" ry="50" fill="#ff4fd0"/><ellipse cx="335" cy="572" rx="52" ry="30" fill="#ff4fd0"/><g filter="url(#bl)" opacity="0.8"><circle cx="212" cy="250" r="92" fill="none" stroke="#9fe8f8" stroke-width="10"/><circle cx="222" cy="262" r="90" fill="none" stroke="#f7b3e6" stroke-width="10"/><circle cx="366" cy="426" r="92" fill="none" stroke="#9fe8f8" stroke-width="10"/><circle cx="376" cy="438" r="90" fill="none" stroke="#f7b3e6" stroke-width="10"/></g></g><g clip-path="url(#sk)"><path d="M435 111L449.5 127C435 132 415 138 406 144.5C415 155 425 160 430 162C450 170 470 178 474 183C484 195 488 205 488 207C492 225 496 245 499.6 252C505 242 510 235 515 231C525 222 530 218 536 217C555 215 570 220 580 226L600 226L560 100L440 60Z" fill="#3b2f0a"/></g><path d="M256.9 53C330 48 450 80 512 154C565 215 590 270 584 318C580 390 565 440 551 472C525 520 495 545 459 554C410 570 360 580 315 578L284 577C250 578 225 578 210 570C190 560 183 545 184.5 530L182.5 507.4C160 506 140 498 130 488C120 478 117 465 118 450L116.9 430.2C100 430 80 425 67 413C52 400 47 380 51 362C55 345 63 333 71.9 324.7C63 300 58 260 60.3 210.2C70 120 170 55 256.9 53Z" fill="none" stroke="#3b2f0a" stroke-width="29" stroke-linejoin="round"/><circle cx="216" cy="254" r="85" fill="url(#eg)"/><circle cx="371" cy="431" r="86" fill="url(#eg)"/><path d="M188 392C188 377 204 370 218 374C236 379 248 392 250 408C252 421 246 434 233 442C228 430 222 422 212 418C197 413 188 404 188 392Z" fill="#3b2f0a"/></svg>
</body></html>
